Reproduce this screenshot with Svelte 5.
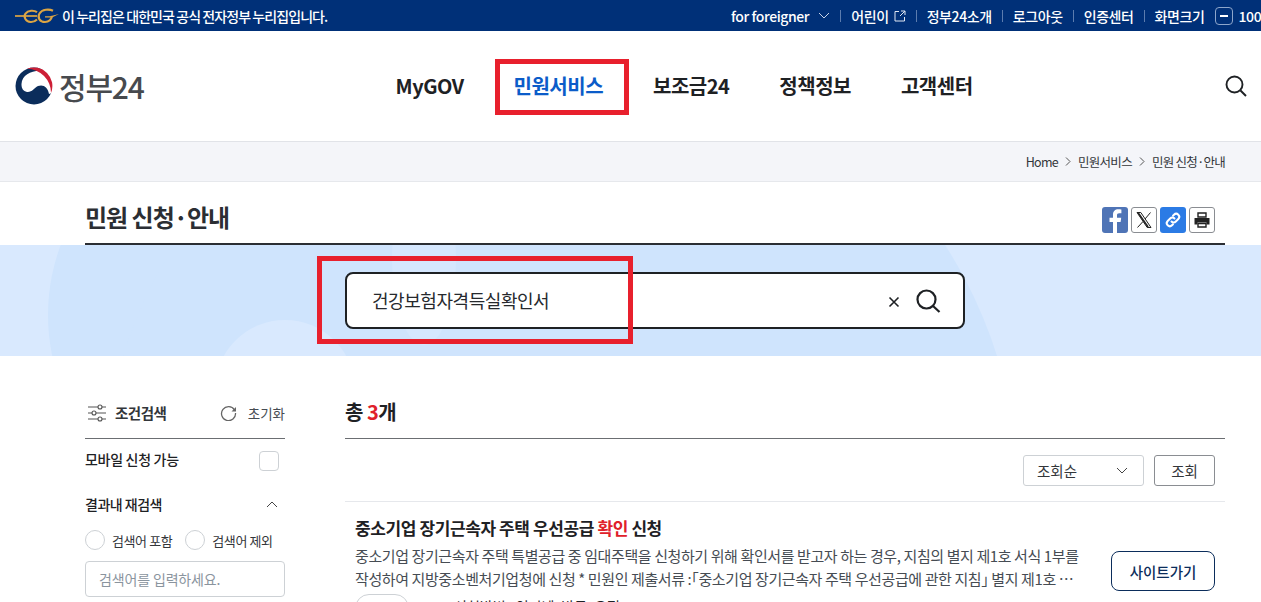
<script>
  const utils = [
    { label: "어린이", ext: true },
    { label: "정부24소개" },
    { label: "로그아웃" },
    { label: "인증센터" }
  ]
  const nav = ["MyGOV", "민원서비스", "보조금24", "정책정보", "고객센터"]
</script>

<div class="page">
  <div class="topbar">
    <div class="nuri">
      <svg class="eg" width="44" height="16" viewBox="0 0 44 16" fill="none" stroke="#dca544">
        <path d="M0 8h22" stroke-width="1.700" />
        <path d="M22 4.200c-3-2.200-9-2-11.500 1.500s.5 8 5 8.300c3 .2 5-1 6.500-2.500" stroke-width="2.100" />
        <path d="M38 2.800c-4-2-11-1.500-13.500 2.700s.5 8.500 5.500 8.500c4 0 6.500-3 7-6" stroke-width="2.100" />
        <path d="M30 8.300h5l9-2.300-7 3.500h-7z" fill="#dca544" stroke="none" />
      </svg>
      <span>이 누리집은 대한민국 공식 전자정부 누리집입니다.</span>
    </div>
    <div class="utils">
      <span class="lang">for foreigner
        <svg width="12" height="7" viewBox="0 0 12 7" fill="none" stroke="#c6d3e8" stroke-width="1"><path d="M1 1l5 5 5-5" /></svg>
      </span>
      {#each utils as u}
        <i class="sep"></i>
        <span class="util">{u.label}
          {#if u.ext}
            <svg width="12" height="12" viewBox="0 0 12 12" fill="none" stroke="#dfe6f2" stroke-width="1"><path d="M5 1.500H1v9.500h9.500V7M7 1h4v4M11 1L6 6" /></svg>
          {/if}
        </span>
      {/each}
      <i class="sep"></i>
      <span class="util">화면크기</span>
      <span class="minus"></span>
      <span class="util">100%</span>
    </div>
  </div>

  <header class="header">
    <div class="logo">
      <svg width="38" height="38" viewBox="0 0 38 38">
        <circle cx="19" cy="19" r="18.500" fill="#0b2d5b" />
        <path d="M27 4C17 3 7 8 6.500 17c-.2 4 1.500 7.500 5.500 8 5 .5 7-4 11-6 5-2 10 1 11 8l3-1 4-6-2-20H27z" fill="#fff" />
        <path d="M12 1.800A18.500 18.500 0 0 1 36 26 24 24 0 0 0 12 1.800z" fill="#cd1f36" />
      </svg>
      <span>정부24</span>
    </div>
    <nav class="gnb">
      {#each nav as item, i}
        <span class:active={i === 1}>{item}</span>
      {/each}
    </nav>
    <svg class="search-top" width="24" height="24" viewBox="0 0 24 24" fill="none" stroke="#1e2124" stroke-width="1.900">
      <circle cx="10.500" cy="10.500" r="8" /><path d="M16.500 16.500l5.500 5.500" />
    </svg>
  </header>

  <div class="crumbs">
    <div class="inner crumb-row">
      <span>Home</span>
      <svg width="6" height="9" viewBox="0 0 6 9" fill="none" stroke="#555" stroke-width="1"><path d="M1 .5l4 4-4 4" /></svg>
      <span>민원서비스</span>
      <svg width="6" height="9" viewBox="0 0 6 9" fill="none" stroke="#555" stroke-width="1"><path d="M1 .5l4 4-4 4" /></svg>
      <span>민원 신청·안내</span>
    </div>
  </div>

  <div class="inner title-row">
    <h1>민원 신청·안내</h1>
    <div class="share">
      <span class="sq fb">
        <svg width="26" height="26" viewBox="0 0 26 26"><path d="M15 26V15h3.600l.6-4.200H15V8.300c0-1.300.5-2.100 2.200-2.100h2.200V2.500c-.5-.1-1.800-.2-3.100-.2-3.200 0-5.300 1.900-5.300 5.500v3H7.500V15H11v11z" fill="#fff" /></svg>
      </span>
      <span class="sq">
        <svg width="18" height="18" viewBox="0 0 18 18" fill="none" stroke="#222" stroke-width="1"><path d="M2 1.500h3.800l10.200 15h-3.800zM15.500 1.500L10 8M8 10.500l-5.500 6" /><path d="M3.300 2l9.800 14" stroke-width="1.500" /></svg>
      </span>
      <span class="sq link">
        <svg width="18" height="18" viewBox="0 0 18 18" fill="none" stroke="#fff" stroke-width="2" stroke-linecap="round"><path d="M7.500 10.500a3 3 0 0 0 4.300 0l2.500-2.500a3 3 0 0 0-4.300-4.300L9 4.700" /><path d="M10.500 7.500a3 3 0 0 0-4.300 0L3.700 10a3 3 0 0 0 4.300 4.300l1-1" /></svg>
      </span>
      <span class="sq">
        <svg width="18" height="18" viewBox="0 0 18 18"><path d="M5 2h8v4H5z" fill="none" stroke="#222" stroke-width="1.400" /><path d="M1.500 7h15v6.500h-3v-2h-9v2h-3z" fill="#222" /><path d="M5 12.500h8v3.500H5z" fill="none" stroke="#222" stroke-width="1.400" /></svg>
      </span>
    </div>
  </div>

  <section class="band">
    <span class="blob blob1"></span>
    <span class="blob blob2"></span>
    <span class="blob stripe"></span>
    <span class="blob blob3"></span>
    <div class="searchbox">
      <span class="query">건강보험자격득실확인서</span>
      <svg width="12" height="12" viewBox="0 0 12 12" stroke="#1e2124" stroke-width="1.600"><path d="M1.500 1.500l9 9M10.500 1.500l-9 9" /></svg>
      <svg width="26" height="26" viewBox="0 0 26 26" fill="none" stroke="#1e2124" stroke-width="2.200"><circle cx="11.500" cy="11.500" r="9" /><path d="M18 18l6.500 6" /></svg>
    </div>
  </section>

  <div class="inner body">
    <aside class="side">
      <div class="side-head">
        <svg width="20" height="20" viewBox="0 0 20 20" fill="#fff" stroke="#555" stroke-width="1.100">
          <path d="M1 4h18M1 10h18M1 16h18" /><circle cx="13" cy="4" r="2" /><circle cx="7" cy="10" r="2" /><circle cx="13" cy="16" r="2" />
        </svg>
        <strong>조건검색</strong>
        <span class="reset">
          <svg width="17" height="17" viewBox="0 0 17 17" fill="none" stroke="#666" stroke-width="1.300"><path d="M14.500 6A7 7 0 1 0 15.500 9" /><path d="M16 3v4.500h-4.500z" fill="#666" stroke="none" /></svg>
          초기화
        </span>
      </div>
      <div class="mobile">
        <span>모바일 신청 가능</span>
        <span class="check"></span>
      </div>
      <div class="re-head">
        <span>결과내 재검색</span>
        <svg width="12" height="7" viewBox="0 0 12 7" fill="none" stroke="#444" stroke-width="1"><path d="M1 6l5-5 5 5" /></svg>
      </div>
      <div class="radios">
        <span class="circle"></span><span>검색어 포함</span>
        <span class="circle second"></span><span>검색어 제외</span>
      </div>
      <div class="field">검색어를 입력하세요.</div>
    </aside>

    <main class="results">
      <div class="total">총 <em>3</em>개</div>
      <div class="sort">
        <span class="select">조회순
          <svg width="12" height="7" viewBox="0 0 12 7" fill="none" stroke="#444" stroke-width="1"><path d="M1 1l5 5 5-5" /></svg>
        </span>
        <span class="btn">조회</span>
      </div>
      <article class="item">
        <div class="item-text">
          <h2>중소기업 장기근속자 주택 우선공급 <em>확인</em> 신청</h2>
          <p>
            <span>중소기업 장기근속자 주택 특별공급 중 임대주택을 신청하기 위해 확인서를 받고자 하는 경우, 지침의 별지 제1호 서식 1부를</span>
            <span>작성하여 지방중소벤처기업청에 신청 * 민원인 제출서류 :｢중소기업 장기근속자 주택 우선공급에 관한 지침｣ 별지 제1호 서식 1부</span>
          </p>
          <div class="meta"><span class="pill">온라인</span><span class="how">신청방법 : 인터넷, 방문, 우편</span></div>
        </div>
        <span class="go">사이트가기</span>
      </article>
    </main>
  </div>

  <span class="mark mark-nav"></span>
  <span class="mark mark-search"></span>
</div>

<style>
  :global(body) {
    overflow: hidden;
    font-family: "Noto Sans CJK KR", "Noto Sans", sans-serif;
    color: #1e2124;
  }

  .page {
    position: relative;
    width: 1310px;
    height: 602px;
    overflow: hidden;
  }

  .inner {
    width: 1140px;
    margin: 0 auto;
  }

  .topbar {
    display: flex;
    justify-content: space-between;
    align-items: center;
    height: 31px;
    padding: 0 0 0 15px;
    background: #003078;
    color: #fff;
    font-size: 14px;
    font-weight: 500;
  }

  .nuri {
    display: flex;
    align-items: center;
    gap: 3px;
    letter-spacing: -0.93px;
  }

  .utils {
    display: flex;
    align-items: center;
    margin-right: 36px;
    letter-spacing: -0.4px;
  }

  .lang {
    display: flex;
    align-items: center;
    gap: 9px;
  }

  .util {
    display: flex;
    align-items: center;
    gap: 5px;
  }

  .sep {
    width: 1px;
    height: 12px;
    margin: 0 10px;
    background: #5c7cae;
  }

  .minus {
    position: relative;
    width: 18px;
    height: 18px;
    margin: 0 6px 0 10px;
    border: 1px solid #8ea6cb;
    border-radius: 4px;
    box-sizing: border-box;
  }

  .minus::after {
    content: "";
    position: absolute;
    left: 4px;
    top: 7px;
    width: 8px;
    height: 2px;
    background: #fff;
  }

  .header {
    position: relative;
    display: flex;
    align-items: center;
    height: 110px;
    border-bottom: 1px solid #e1e3e8;
    box-sizing: content-box;
  }

  .logo {
    display: flex;
    align-items: center;
    gap: 6px;
    margin-left: 15px;
    font-size: 30px;
    font-weight: 500;
    letter-spacing: -1.2px;
    color: #474a4e;
  }

  .gnb {
    display: flex;
    gap: 50px;
    margin: -2px 0 0 252px;
    font-size: 20px;
    font-weight: 700;
    letter-spacing: -0.5px;
  }

  .gnb .active {
    color: #0b5cc9;
  }

  .search-top {
    position: absolute;
    left: 1224px;
    top: 43px;
  }

  .crumbs {
    height: 39px;
    background: #f4f5f9;
    border-bottom: 1px solid #e6e8ec;
  }

  .crumb-row {
    display: flex;
    justify-content: flex-end;
    align-items: center;
    gap: 7px;
    height: 39px;
    font-size: 12.500px;
    letter-spacing: -0.72px;
    color: #33363a;
  }

  .title-row {
    display: flex;
    justify-content: space-between;
    align-items: center;
    height: 63px;
    padding-top: 8px;
    box-sizing: border-box;
    border-bottom: 2px solid #2b2e33;
  }

  h1 {
    margin: 0;
    font-size: 24px;
    font-weight: 700;
    letter-spacing: -1px;
    color: #2b2e33;
  }

  .share {
    display: flex;
    gap: 3px;
    margin: 6px 10px 0 0;
  }

  .sq {
    display: flex;
    justify-content: center;
    align-items: center;
    width: 26px;
    height: 26px;
    border: 1px solid #8a8d92;
    border-radius: 3px;
    box-sizing: border-box;
    overflow: hidden;
  }

  .sq.fb {
    background: #4f74b6;
    border: 0;
  }

  .sq.link {
    background: #2b7be5;
    border: 0;
  }

  .band {
    position: relative;
    display: flex;
    align-items: center;
    height: 111px;
    overflow: hidden;
    background: #d9e9fe;
  }

  .blob {
    position: absolute;
    border-radius: 50%;
    background: #cfe4fd;
  }

  .blob1 {
    left: 48px;
    top: -130px;
    width: 400px;
    height: 400px;
  }

  .blob2 {
    left: 102px;
    top: -210px;
    width: 916px;
    height: 916px;
  }

  .stripe {
    left: 392px;
    top: -70px;
    width: 64px;
    height: 170px;
    background: #d5e7fe;
  }

  .blob3 {
    left: 215px;
    top: 75px;
    width: 140px;
    height: 140px;
    background: #d9e9fe;
  }

  .searchbox {
    position: relative;
    display: flex;
    align-items: center;
    width: 620px;
    height: 57px;
    margin: 0 0 0 345px;
    padding: 0 22px 0 25px;
    border: 2px solid #1e2124;
    border-radius: 8px;
    box-sizing: border-box;
    background: #fff;
  }

  .query {
    flex: 1;
    margin-top: -2px;
    font-size: 18px;
    letter-spacing: -0.45px;
    color: #26292d;
  }

  .searchbox svg:first-of-type {
    margin-top: 2px;
  }

  .searchbox svg:last-child {
    margin-left: 15px;
  }

  .body {
    display: flex;
    gap: 60px;
    padding-top: 33px;
  }

  .side {
    flex: 0 0 200px;
  }

  .side-head {
    display: flex;
    align-items: center;
    height: 50px;
    padding-bottom: 2px;
    border-bottom: 1px solid #6b6e72;
    box-sizing: border-box;
    font-size: 14.500px;
  }

  .side-head svg:first-child {
    margin: 0 8px 0 2px;
  }

  .side-head strong {
    font-weight: 700;
    letter-spacing: -0.5px;
    color: #33363a;
  }

  .reset {
    display: flex;
    align-items: center;
    gap: 3px;
    margin-left: auto;
    font-size: 13.500px;
    color: #464c53;
  }

  .mobile {
    display: flex;
    justify-content: space-between;
    align-items: center;
    height: 43px;
    padding: 0 6px 0 0;
    font-size: 14px;
    font-weight: 500;
    letter-spacing: -0.3px;
  }

  .mobile span:first-child {
    margin-top: -3px;
  }

  .check {
    width: 20px;
    height: 20px;
    border: 1px solid #cdd1d5;
    border-radius: 4px;
    box-sizing: border-box;
  }

  .re-head {
    display: flex;
    justify-content: space-between;
    align-items: center;
    height: 44px;
    padding-right: 7px;
    font-size: 14px;
    font-weight: 500;
    letter-spacing: -0.5px;
  }

  .radios {
    display: flex;
    align-items: center;
    height: 28px;
    margin-bottom: 7px;
    font-size: 13px;
    letter-spacing: -0.4px;
    color: #33363a;
  }

  .circle {
    width: 20px;
    height: 20px;
    margin-right: 7px;
    border: 1px solid #cdd1d5;
    border-radius: 50%;
    box-sizing: border-box;
  }

  .circle.second {
    margin-left: 13px;
  }

  .field {
    display: flex;
    align-items: center;
    height: 36px;
    padding-left: 13px;
    border: 1px solid #cdd1d5;
    border-radius: 4px;
    box-sizing: border-box;
    font-size: 14px;
    letter-spacing: -0.15px;
    color: #8a949e;
  }

  .results {
    flex: 1;
  }

  .total {
    height: 50px;
    border-bottom: 1px solid #6b6e72;
    box-sizing: border-box;
    font-size: 20px;
    font-weight: 700;
    line-height: 45px;
    letter-spacing: -0.5px;
  }

  .total em, h2 em {
    font-style: normal;
    color: #e0202a;
  }

  .sort {
    display: flex;
    justify-content: flex-end;
    align-items: center;
    gap: 10px;
    height: 62px;
    padding-right: 10px;
    border-bottom: 1px solid #e6e8ec;
    font-size: 14.500px;
    color: #33363a;
  }

  .select {
    display: flex;
    justify-content: space-between;
    align-items: center;
    width: 121px;
    height: 31px;
    padding: 0 15px 0 13px;
    border: 1px solid #cdd1d5;
    border-radius: 3px;
    box-sizing: border-box;
  }

  .btn {
    display: flex;
    justify-content: center;
    align-items: center;
    width: 61px;
    height: 31px;
    border: 1px solid #8a8d92;
    border-radius: 3px;
    box-sizing: border-box;
  }

  .item {
    display: flex;
    align-items: flex-start;
    padding: 14px 10px 0;
  }

  .item-text {
    flex: 0 0 726px;
    min-width: 0;
  }

  h2 {
    margin: 0 0 4px;
    font-size: 17px;
    font-weight: 700;
    line-height: 24px;
    letter-spacing: -0.4px;
  }

  p {
    margin: 0;
    font-size: 15px;
    line-height: 23px;
    letter-spacing: -0.4px;
    color: #464c53;
  }

  p span {
    display: block;
    overflow: hidden;
    white-space: nowrap;
    text-overflow: ellipsis;
  }

  .meta {
    display: flex;
    align-items: flex-start;
    gap: 45px;
    margin-top: 4px;
    font-size: 14px;
  }

  .how {
    margin-top: 2px;
    line-height: 20px;
  }

  .pill {
    display: flex;
    justify-content: center;
    align-items: center;
    width: 54px;
    height: 28px;
    border: 1px solid #cdd1d5;
    border-radius: 14px;
    box-sizing: border-box;
  }

  .go {
    display: flex;
    justify-content: center;
    align-items: center;
    flex: 0 0 104px;
    height: 40px;
    margin: 35px 0 0 30px;
    border: 1px solid #0b2d5b;
    border-radius: 8px;
    box-sizing: border-box;
    font-size: 14.500px;
    font-weight: 500;
    color: #0b2d5b;
  }

  /* red annotation boxes drawn over the page */
  .mark {
    position: absolute;
    border: 5px solid #e8202d;
    box-sizing: border-box;
  }

  .mark-nav {
    left: 495px;
    top: 59px;
    width: 134px;
    height: 56px;
  }

  .mark-search {
    left: 317px;
    top: 256px;
    width: 316px;
    height: 88px;
  }
</style>
